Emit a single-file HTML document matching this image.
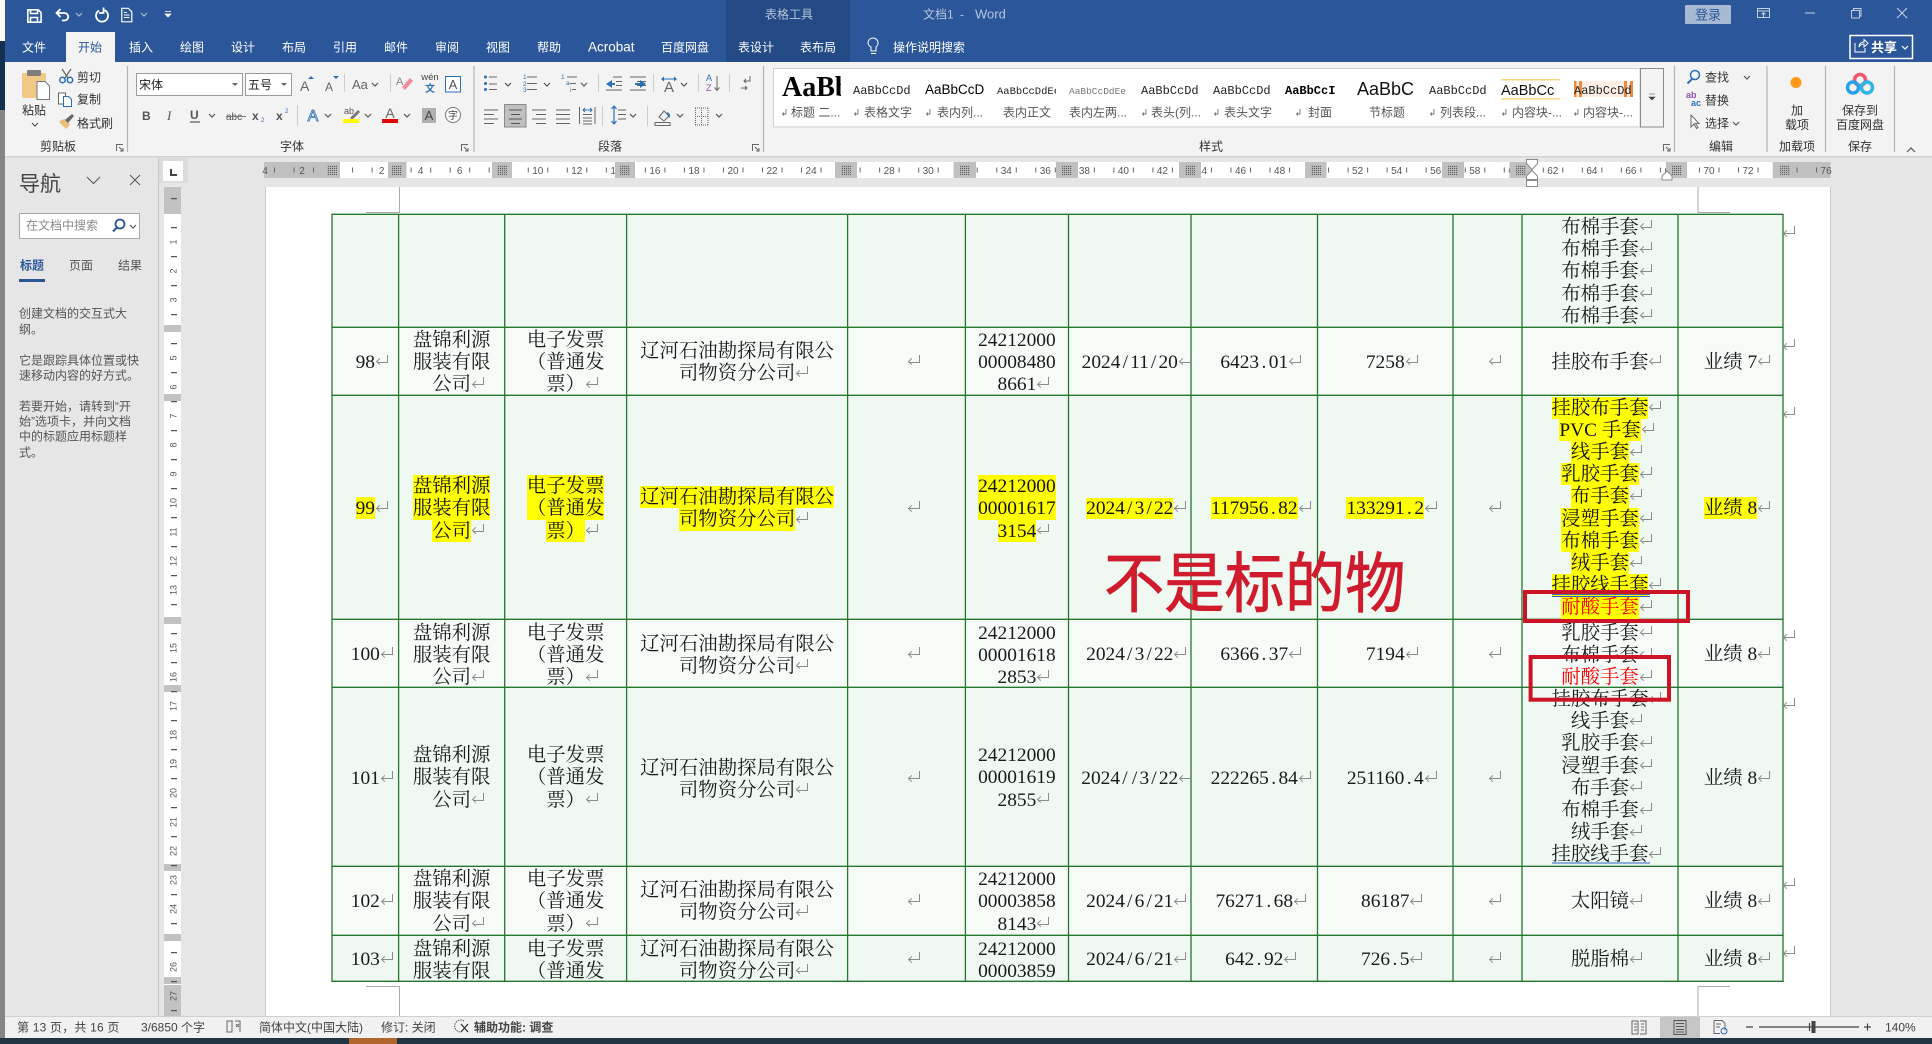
<!DOCTYPE html>
<html lang="zh-CN"><head><meta charset="utf-8"><title>文档1 - Word</title>
<style>
html,body{margin:0;padding:0;width:1932px;height:1044px;overflow:hidden;background:#e6e6e6}
svg{position:absolute;left:0;top:0;font-family:"Liberation Sans","Noto Sans CJK SC",sans-serif;font-size:12px}
.c{position:absolute;margin-top:2px;text-align:center;font:19.4px/22.2px "Liberation Serif","Noto Serif CJK SC",serif;color:#1a1a1a;white-space:nowrap}
mark{background:#ff0;color:#111;display:inline-block;height:22.2px;line-height:24.2px;vertical-align:top;position:relative;top:-1px}
i{display:inline-block;width:0;height:0;position:relative}
i::before{content:"";position:absolute;left:2px;top:-13px;width:10px;height:7px;border-right:1px solid #8c8c8c;border-bottom:1px solid #8c8c8c}
i::after{content:"";position:absolute;left:2px;top:-8.5px;width:4px;height:4px;border-left:1px solid #8c8c8c;border-bottom:1px solid #8c8c8c;transform:rotate(45deg)}
u{display:inline-block;width:9.7px;text-decoration:none;text-align:center}
.r{color:#f00}
.k1{left:332px;width:66.6px}.k2{left:398.6px;width:106px}.k3{left:504.7px;width:122px}.k4{left:626.6px;width:221px}.k5{left:847.6px;width:118px}.k6{left:965.4px;width:103px}.k7{left:1068.5px;width:122.5px;overflow:hidden;height:23px}.k8{left:1191px;width:126.5px}.k9{left:1317.5px;width:135.5px}.k10{left:1453px;width:69px}.k11{left:1522px;width:156px}.k12{left:1678px;width:105px}.e{left:1784px;width:0;text-align:left}
</style></head><body>
<svg width="1932" height="1044" viewBox="0 0 1932 1044">
<defs>
<path id="ch" d="M0 0l3 3 3-3" fill="none" stroke="#555" stroke-width="1.2"/>
<pattern id="h" width="2" height="2" patternUnits="userSpaceOnUse"><rect width="1.2" height="1.2" fill="#666"/></pattern>
</defs>
<rect width="1932" height="1044" fill="#e6e6e6"/>
<!-- left strip -->
<rect x="0" y="0" width="5" height="41" fill="#fff"/><rect x="0" y="41" width="5" height="69" fill="#14304f"/><rect x="0" y="110" width="5" height="934" fill="#858585"/>
<!-- title -->
<rect x="5" width="1927" height="62" fill="#2b579a"/>
<rect x="726" width="124" height="62" fill="#234a84"/>
<rect x="66" y="32" width="49" height="30" fill="#f3f3f3"/>
<rect x="5" y="62" width="1927" height="94" fill="#f3f3f3"/>
<rect x="5" y="156" width="1927" height="1.5" fill="#d2d2d2"/>
<!-- QAT -->
<g fill="none" stroke="#fff" stroke-width="1.6">
<path d="M27.8 9.8h10.4l2.9 2.9v9.5H27.8z"/><path d="M30.5 10v3.5h7V10" /><path d="M30.5 22v-4.5h7V22"/>
<path d="M60.5 9l-4 4 4 4M57 13h7.500a3.700 3.700 0 0 1 0 7.500H62" stroke-width="1.800"/>
<path d="M99 10.500a6 6 0 1 0 5.500-.3M103.500 7.500v5.500H99" stroke-width="1.800" />
<path d="M121.800 8.300h6.500l3.500 3.500v10h-10z" stroke-width="1.200"/><path d="M124 12.500h3M124 15h5.500M124 17.500h5.500" stroke-width="1"/>
</g>
<path d="M76 13l3 3 3-3M141 13l3 3 3-3" fill="none" stroke="#a9bad4" stroke-width="1.200"/>
<path d="M165 11.500h6M165 14h6l-3 3z" fill="#fff" stroke="#fff" stroke-width=".7"/>
<!-- tabs -->
<g fill="#fff">
<text x="22" y="51.400">文件</text><text x="78" y="51.400" fill="#2b579a">开始</text><text x="129" y="51.400">插入</text><text x="180" y="51.400">绘图</text><text x="231" y="51.400">设计</text><text x="282" y="51.400">布局</text><text x="333" y="51.400">引用</text><text x="384" y="51.400">邮件</text><text x="435" y="51.400">审阅</text><text x="486" y="51.400">视图</text><text x="537" y="51.400">帮助</text><text x="588" y="51.400" font-size="13.500">Acrobat</text><text x="661" y="51.400">百度网盘</text><text x="738" y="51.400">表设计</text><text x="800" y="51.400">表布局</text><text x="893" y="51.400">操作说明搜索</text>
</g>
<path d="M868 43a5 5 0 1 1 8 4v4h-5v-4a5 5 0 0 1-3-4zM871 53.500h5" fill="none" stroke="#fff" stroke-width="1"/>
<g fill="#b6c5dd"><text x="765" y="18.400">表格工具</text><text x="923" y="18.400">文档1</text><text x="960" y="18.400">-</text><text x="975" y="18.400" font-size="13">Word</text></g>
<rect x="1685" y="5" width="46" height="19" rx="1" fill="#a7b9d3"/><text x="1708" y="19.400" text-anchor="middle" fill="#2b579a" font-size="13">登录</text>
<g fill="none" stroke="#c3d0e3" stroke-width="1"><rect x="1757.500" y="8.500" width="12" height="9"/><path d="M1757.500 11h12M1763.500 17v-4.500M1761.500 14.500l2-2 2 2"/><path d="M1805 13h10"/><rect x="1851.500" y="10.500" width="8" height="7.500"/><path d="M1853.500 10.500v-2h7.500v7.500h-1.500"/><path d="M1897 8l10 10M1907 8l-10 10"/></g>
<rect x="1850" y="35.500" width="62.500" height="23" fill="none" stroke="#fff" stroke-width="1.500"/>
<path d="M1855 43v9h10v-4M1859 47c0-3 2-5 5-5v-2.500l4 3.800-4 3.700V44c-2 0-4 1-5 3z" fill="none" stroke="#fff" stroke-width="1"/>
<text x="1871" y="52" fill="#fff" font-size="13" font-weight="700">共享</text><path d="M1902 46l3 3 3-3" fill="none" stroke="#fff" stroke-width="1.200"/>
<!-- group separators -->
<g stroke="#b4b4b4" stroke-width="1.200"><path d="M127.500 66v86M474 66v86M763.500 66v86M1674.500 66v86M1767 66v86M1825.500 66v86M1894.500 66v86"/></g>
<g stroke="#cdcdcd" stroke-width="1"><path d="M344.500 74v18M390.500 74v18M297.500 105v21M598.500 74v18M653.500 74v18M698.500 74v18M729.500 74v18M602.500 106v20M647.500 106v20"/></g>
<!-- clipboard -->
<rect x="22" y="73" width="24" height="25" rx="1.500" fill="#f0c987"/><rect x="27" y="70" width="14" height="6" rx="1" fill="#7e7e7e"/><rect x="31" y="70" width="6" height="3" fill="#7e7e7e"/>
<path d="M37 81.500h8l4.500 4.500v13.500H37z" fill="#fff" stroke="#777"/>
<g fill="#333"><text x="22" y="114.400">粘贴</text><text x="77" y="81.400">剪切</text><text x="77" y="103.400">复制</text><text x="77" y="127.400">格式刷</text></g>
<use href="#ch" x="32" y="123"/>
<g fill="none" stroke="#666" stroke-width="1.300"><path d="M62 69l6 9M71 69l-6 9" /></g><g fill="none" stroke="#2b6fb7" stroke-width="1.500"><circle cx="62.500" cy="80" r="2.700"/><circle cx="70" cy="80" r="2.700"/></g>
<g fill="#fff" stroke="#666" stroke-width="1"><path d="M58.500 93h7l0 11h-7z"/><path d="M63.500 96.500h5l3 3v7h-8z" stroke="#2b6fb7"/></g>
<path d="M59 122l7 7 2-2 2-3-5-5-4 1z" fill="#e9bd7b"/><path d="M65 120l7-6 2 2-6 7z" fill="#666"/>
<!-- launchers -->
<g fill="none" stroke="#666" stroke-width="1"><path d="M116.500 151v-6.500H123M119 147l3.500 3.500M123 148v3h-3"/><path d="M461.500 151v-6.500H468M464 147l3.500 3.500M468 148v3h-3"/><path d="M752.500 151v-6.500H759M755 147l3.500 3.500M759 148v3h-3"/><path d="M1663.500 151v-6.500H1670M1666 147l3.500 3.500M1670 148v3h-3"/></g>
<g fill="#333"><text x="58" y="150.400" text-anchor="middle">剪贴板</text><text x="292" y="150.400" text-anchor="middle">字体</text><text x="610" y="150.400" text-anchor="middle">段落</text><text x="1211" y="150.400" text-anchor="middle">样式</text><text x="1721" y="150.400" text-anchor="middle">编辑</text><text x="1797" y="150.400" text-anchor="middle">加载项</text><text x="1860" y="150.400" text-anchor="middle">保存</text></g>
<!-- font boxes -->
<rect x="136.500" y="73.500" width="106" height="22" fill="#fff" stroke="#9c9c9c"/><rect x="245.500" y="73.500" width="46" height="22" fill="#fff" stroke="#9c9c9c"/>
<text x="139" y="89" fill="#222">宋体</text><text x="248" y="89" fill="#222">五号</text>
<path d="M232 83h6l-3 3zM281 83h6l-3 3z" fill="#666"/>
<g font-family="Liberation Sans" fill="#666">
<text x="300" y="91" font-size="14">A</text><text x="325" y="91" font-size="12">A</text><text x="352" y="89" font-size="13">Aa</text>
</g>
<path d="M308 79l3-3 3 3zM333 76h6l-3 3z" fill="#2b6fb7"/>
<use href="#ch" x="372" y="83"/>
<!-- eraser, wen, A box -->
<path d="M402 87l8-9 3 3-8 9z" fill="#ef8b9a"/><text x="396" y="85" fill="#888" font-size="11">A</text>
<text x="430" y="80" text-anchor="middle" font-size="9.500" fill="#444">wén</text><text x="430" y="92" text-anchor="middle" font-size="10" fill="#2b6fb7" font-weight="700">文</text>
<rect x="445.500" y="76.500" width="15" height="15.500" fill="#fff" stroke="#2b6fb7"/><text x="453" y="89" text-anchor="middle" font-size="13" fill="#555">A</text>
<!-- row 2 font -->
<g font-family="Liberation Sans" fill="#555">
<text x="142" y="120" font-weight="700" font-size="12">B</text><text x="167" y="120" font-style="italic" font-family="Liberation Serif" font-size="13">I</text><text x="190" y="119" font-weight="700" font-size="12">U</text><text x="226" y="120" font-size="10">abc</text><text x="252" y="120" font-weight="700" font-size="12">x</text><text x="261" y="122" font-size="6" fill="#2b6fb7">2</text><text x="276" y="120" font-weight="700" font-size="12">x</text><text x="285" y="113" font-size="6" fill="#2b6fb7">2</text>
</g>
<path d="M190 122h10" stroke="#555" stroke-width="1.200"/><path d="M226 116.500h20" stroke="#777" stroke-width="1"/>
<use href="#ch" x="209" y="114"/><use href="#ch" x="325" y="114"/><use href="#ch" x="365" y="114"/><use href="#ch" x="404" y="114"/>
<text x="313" y="121" text-anchor="middle" font-size="16" font-family="Liberation Sans" fill="#dbe8f6" stroke="#2b6fb7" stroke-width=".8">A</text>
<text x="344" y="114" font-size="9" fill="#555">ab</text><path d="M350 118l8-8 2 2-8 8z" fill="#777"/><rect x="343" y="119" width="16" height="4" fill="#ff0"/>
<text x="390" y="118" text-anchor="middle" font-size="14" font-family="Liberation Sans" fill="#666">A</text><rect x="382" y="119" width="16" height="4" fill="#e60000"/>
<rect x="422" y="108" width="14" height="15" fill="#b0b0b0"/><text x="429" y="120" text-anchor="middle" font-size="13" font-family="Liberation Sans" fill="#444">A</text>
<circle cx="453" cy="115" r="7.500" fill="#fff" stroke="#777"/><text x="453" y="119" text-anchor="middle" font-size="10" fill="#444">字</text>
<!-- para icons -->
<g fill="none" stroke="#666" stroke-width="1">
<path d="M489 77h8M489 84h8M489 89.500h8"/><path d="M527 77h10M527 83.500h10M527 89.500h10"/><path d="M567 77h10M570 83.500h6M572 89.500h4"/>
<path d="M613 77h9M616 81.500h6M616 85.500h6M606 90h16"/><path d="M630 77h16M637 81.500h9M637 85.500h9M630 90h16"/>
<path d="M484 110h14M484 114.500h10M484 119h14M484 123.500h10"/><path d="M510 110h14M512 114.500h10M510 119h14M512 123.500h10"/><path d="M532 110h14M536 114.500h10M532 119h14M536 123.500h10"/><path d="M556 110h14M556 114.500h14M556 119h14M556 123.500h14"/>
<path d="M579.500 107v17M595 107v17M583 114.500h9M583 118h9M583 121h9M583 124h9"/><path d="M618 110h8M618 114.500h8M618 119h8"/>
<path d="M655 122.500h15v3h-15z"/><path d="M659 117l5-6 5 5-5 5z"/><path d="M695 108h13M695 125h13" stroke-dasharray="1 1"/><path d="M695.500 108v17M708 108v17M701.500 108v17M695 116.500h13" stroke-dasharray="1 1"/>
</g>
<g fill="#2b6fb7"><circle cx="485.500" cy="77" r="1.500"/><circle cx="485.500" cy="83.500" r="1.500"/><circle cx="485.500" cy="89.500" r="1.500"/></g>
<g fill="#2b6fb7" font-size="6.500" font-family="Liberation Sans"><text x="523" y="79">1</text><text x="523" y="86">2</text><text x="523" y="92">3</text><text x="561" y="79">1</text><text x="566" y="85">a</text><text x="570" y="92">i</text></g>
<path d="M606 84l6-4v3h3v2h-3v3zM646 84l-6-4v3h-5v2h5v3z" fill="#2b6fb7"/>
<text x="669" y="92" text-anchor="middle" font-size="15" font-family="Liberation Sans" fill="#666">A</text><path d="M661 79l3-2.500v5zM677 79l-3-2.500v5z" fill="#2b6fb7"/><path d="M664 79h10" stroke="#2b6fb7" stroke-width="1"/>
<text x="706" y="81" font-size="9" fill="#2b6fb7" font-family="Liberation Sans">A</text><text x="706" y="91" font-size="9" fill="#8b4fb3" font-family="Liberation Sans">Z</text><path d="M717 76v14M714.500 87.500l2.500 3 2.500-3" fill="none" stroke="#666"/>
<path d="M750 76v5h-6M746 79l-2 2 2 2M741 88h6M745 86l2 2-2 2" fill="none" stroke="#666"/>
<rect x="504.500" y="104.500" width="21.500" height="22.500" fill="#c0c0c0" stroke="#8a8a8a"/><path d="M509 110h13M511 114.500h9M509 119h13M511 123.500h9" stroke="#555"/>
<path d="M614 106v18M611.500 109l2.500-3 2.500 3M611.500 121l2.500 3 2.500-3" fill="none" stroke="#2b6fb7" stroke-width="1.200"/>
<path d="M583 110h9M585 108l-2 2 2 2M590 108l2 2-2 2" fill="none" stroke="#2b6fb7"/>
<path d="M667 112c3 1 4 4 2 6-1-2-2-4-2-6z" fill="#2b6fb7"/>
<use href="#ch" x="505" y="83"/><use href="#ch" x="544" y="83"/><use href="#ch" x="581" y="83"/><use href="#ch" x="681" y="83"/><use href="#ch" x="630" y="114"/><use href="#ch" x="677" y="114"/><use href="#ch" x="716" y="114"/>
<!-- styles -->
<rect x="773.500" y="68.500" width="866.500" height="58.500" fill="#fff" stroke="#cfcfcf"/>
<rect x="1640.500" y="68.500" width="23" height="58.500" fill="#f3f3f3" stroke="#8a8a8a"/>
<path d="M1649 94h6M1649 97h6l-3 3z" fill="#444" stroke="#444" stroke-width=".6"/>
<svg x="782" y="70" width="59" height="34"><text x="0" y="26" font-family="Liberation Serif" font-weight="700" font-size="28" fill="#000">AaBbCc</text></svg>
<svg x="853" y="70" width="59" height="34"><text x="0" y="24" font-family="Liberation Mono" font-size="12" fill="#222">AaBbCcDd</text></svg>
<svg x="925" y="70" width="59" height="34"><text x="0" y="24" font-family="Liberation Sans" font-size="13.500" fill="#000">AaBbCcDd</text></svg>
<svg x="997" y="70" width="59" height="34"><text x="0" y="24" font-family="Liberation Mono" font-size="10.500" fill="#222">AaBbCcDdEe</text></svg>
<svg x="1069" y="70" width="59" height="34"><text x="0" y="24" font-family="Liberation Mono" font-size="9.500" fill="#777">AaBbCcDdEe</text></svg>
<svg x="1141" y="70" width="59" height="34"><text x="0" y="24" font-family="Liberation Mono" font-size="12" fill="#222">AaBbCcDd</text></svg>
<svg x="1213" y="70" width="59" height="34"><text x="0" y="24" font-family="Liberation Mono" font-size="12" fill="#222">AaBbCcDd</text></svg>
<svg x="1285" y="70" width="59" height="34"><text x="0" y="24" font-family="Liberation Mono" font-size="12" font-weight="700" fill="#000">AaBbCcI</text></svg>
<svg x="1357" y="70" width="59" height="34"><text x="0" y="25" font-family="Liberation Sans" font-size="18" fill="#111">AaBbC</text></svg>
<svg x="1429" y="70" width="59" height="34"><text x="0" y="24" font-family="Liberation Mono" font-size="12" fill="#222">AaBbCcDd</text></svg>
<svg x="1501" y="70" width="59" height="34"><rect y="9" width="59" height="1.500" fill="#fbd67e"/><rect y="28" width="59" height="1.500" fill="#fbd67e"/><text x="0" y="25" font-family="Liberation Sans" font-size="14.500" fill="#111">AaBbCc</text></svg>
<svg x="1574" y="70" width="59" height="34"><rect y="11" width="59" height="16" fill="#fdeee6"/><rect y="11" width="2.500" height="16" fill="#ee8a3c"/><rect x="5" y="11" width="3" height="16" fill="#ee8a3c"/><rect x="50" y="11" width="3" height="16" fill="#ee8a3c"/><rect x="56" y="11" width="3" height="16" fill="#ee8a3c"/><text x="0" y="24" font-family="Liberation Mono" font-size="12" fill="#222">AaBbCcDd</text></svg>
<g fill="#555">
<text x="791" y="116.400">标题 二...</text><text x="864" y="116.400">表格文字</text><text x="937" y="116.400">表内列...</text><text x="1003" y="116.400">表内正文</text><text x="1069" y="116.400">表内左两...</text><text x="1151" y="116.400">表头(列...</text><text x="1224" y="116.400">表头文字</text><text x="1308" y="116.400">封面</text><text x="1369" y="116.400">节标题</text><text x="1440" y="116.400">列表段...</text><text x="1512" y="116.400">内容块-...</text><text x="1583" y="116.400">内容块-...</text>
</g>
<g fill="none" stroke="#777" stroke-width=".9"><path d="M786 109v5h-3M784 112.500l-1.500 1.500 1.500 1.500M858 109v5h-3M856 112.500l-1.500 1.500 1.500 1.500M930 109v5h-3M928 112.500l-1.500 1.500 1.500 1.500M1146 109v5h-3M1144 112.500l-1.500 1.500 1.500 1.500M1218 109v5h-3M1216 112.500l-1.500 1.500 1.500 1.500M1300 109v5h-3M1298 112.500l-1.500 1.500 1.500 1.500M1434 109v5h-3M1432 112.500l-1.500 1.500 1.500 1.500M1506 109v5h-3M1504 112.500l-1.500 1.500 1.500 1.500M1578 109v5h-3M1576 112.500l-1.500 1.500 1.500 1.500"/></g>
<!-- edit -->
<circle cx="1695" cy="75" r="4.500" fill="none" stroke="#2b6fb7" stroke-width="1.500"/><path d="M1692 79l-4.500 4.500" stroke="#2b6fb7" stroke-width="2"/>
<text x="1705" y="81.400" fill="#333">查找</text><text x="1705" y="104.400" fill="#333">替换</text><text x="1705" y="127.400" fill="#333">选择</text>
<use href="#ch" x="1744" y="76"/><use href="#ch" x="1733" y="122"/>
<text x="1686" y="98" font-size="9" fill="#8b4fb3" font-family="Liberation Sans" font-weight="700">ab</text><text x="1691" y="106" font-size="9" fill="#2b6fb7" font-family="Liberation Sans" font-weight="700">ac</text>
<path d="M1691 115v12l3-3 2.500 4.500 1.500-1-2.500-4H1699z" fill="#fff" stroke="#666"/>
<circle cx="1796" cy="82.500" r="5.500" fill="#ff9a1a"/>
<g fill="#333" text-anchor="middle"><text x="1797" y="114.400">加</text><text x="1797" y="129">载项</text><text x="1860" y="114.400">保存到</text><text x="1860" y="129">百度网盘</text></g>
<g fill="none" stroke-width="3.500"><circle cx="1860" cy="80" r="5.500" stroke="#f0566e"/><circle cx="1853" cy="87.500" r="5.500" stroke="#2aa0e8"/><circle cx="1867" cy="87.500" r="5.500" stroke="#2fb5e8"/></g>
<path d="M1907 152l4-4 4 4" fill="none" stroke="#555" stroke-width="1.200"/>
<!-- nav pane -->
<rect x="158" y="157" width="1" height="859" fill="#c6c6c6"/>
<text x="19" y="191" font-size="21" fill="#444">导航</text>
<path d="M87 177l6.500 6.500L100 177M130 175l10 10M140 175l-10 10" fill="none" stroke="#555" stroke-width="1"/>
<rect x="19.500" y="213.500" width="120" height="25" fill="#fff" stroke="#a9a9a9"/>
<text x="26" y="229.400" fill="#8a8a8a">在文档中搜索</text>
<circle cx="120" cy="224" r="4.500" fill="none" stroke="#2b579a" stroke-width="1.800"/><path d="M117 227.500l-4 4" stroke="#2b579a" stroke-width="2.200"/><use href="#ch" x="130" y="225"/>
<text x="20" y="269.400" fill="#2b579a" font-weight="700">标题</text><rect x="19" y="279" width="26" height="3" fill="#2b579a"/>
<text x="69" y="269.400" fill="#555">页面</text><text x="118" y="269.400" fill="#555">结果</text>
<g fill="#555"><text x="19" y="317.400">创建文档的交互式大</text><text x="19" y="333.400">纲。</text><text x="19" y="364.400">它是跟踪具体位置或快</text><text x="19" y="379.400">速移动内容的好方式。</text><text x="19" y="410.400">若要开始，请转到“开</text><text x="19" y="425.400">始”选项卡，并向文档</text><text x="19" y="440.400">中的标题应用标题样</text><text x="19" y="456.400">式。</text></g>
<!-- corner -->
<rect x="159" y="157" width="29" height="26" fill="#dcdcdc"/><rect x="163" y="161" width="20" height="20" fill="#fff"/><path d="M171 169v6h6" fill="none" stroke="#444" stroke-width="2"/>
<!-- h ruler -->
<rect x="264" y="162" width="1566.500" height="16" fill="#c0c0c0"/>
<g fill="#fff"><rect x="340" y="162" width="48" height="16"/><rect x="406.500" y="162" width="85.500" height="16"/><rect x="512" y="162" width="103" height="16"/><rect x="635" y="162" width="200" height="16"/><rect x="857" y="162" width="96.600" height="16"/><rect x="976" y="162" width="80" height="16"/><rect x="1078" y="162" width="101" height="16"/><rect x="1201" y="162" width="104" height="16"/><rect x="1326.500" y="162" width="115.500" height="16"/><rect x="1464" y="162" width="45.600" height="16"/><rect x="1532" y="162" width="134" height="16"/><rect x="1687" y="162" width="85.700" height="16"/></g>
<line x1="274" y1="170" x2="1830" y2="170" stroke="#666" stroke-width="5" stroke-dasharray="1 18.520"/>
<g font-size="10" fill="#555" text-anchor="middle">
<text x="265" y="174">4</text><text x="302" y="174">2</text><text x="381.600" y="174">2</text><text x="420.700" y="174">4</text><text x="459.700" y="174">6</text><text x="498.800" y="174">8</text><text x="537.800" y="174">10</text><text x="576.800" y="174">12</text><text x="615.900" y="174">14</text><text x="654.900" y="174">16</text><text x="694" y="174">18</text><text x="733" y="174">20</text><text x="772" y="174">22</text><text x="811.100" y="174">24</text><text x="850.100" y="174">26</text><text x="889.200" y="174">28</text><text x="928.200" y="174">30</text><text x="967.200" y="174">32</text><text x="1006.300" y="174">34</text><text x="1045.300" y="174">36</text><text x="1084.400" y="174">38</text><text x="1123.400" y="174">40</text><text x="1162.400" y="174">42</text><text x="1201.500" y="174">44</text><text x="1240.500" y="174">46</text><text x="1279.600" y="174">48</text><text x="1318.600" y="174">50</text><text x="1357.600" y="174">52</text><text x="1396.700" y="174">54</text><text x="1435.700" y="174">56</text><text x="1474.800" y="174">58</text><text x="1513.800" y="174">60</text><text x="1552.800" y="174">62</text><text x="1591.900" y="174">64</text><text x="1630.900" y="174">66</text><text x="1670" y="174">68</text><text x="1709" y="174">70</text><text x="1748" y="174">72</text><text x="1787.100" y="174">74</text><text x="1826.100" y="174">76</text>
</g>
<g fill="#c0c0c0"><rect x="325" y="162" width="15" height="16"/><rect x="388" y="162" width="18.500" height="16"/><rect x="492" y="162" width="20" height="16"/><rect x="615" y="162" width="20" height="16"/><rect x="835" y="162" width="22" height="16"/><rect x="953.600" y="162" width="22.400" height="16"/><rect x="1056" y="162" width="22" height="16"/><rect x="1179" y="162" width="22" height="16"/><rect x="1305" y="162" width="21.500" height="16"/><rect x="1442" y="162" width="22" height="16"/><rect x="1509.600" y="162" width="22.400" height="16"/><rect x="1666" y="162" width="21" height="16"/><rect x="1777" y="162" width="15" height="16"/></g>
<g fill="url(#h)"><rect x="327" y="165" width="10" height="10"/><rect x="392" y="165" width="10" height="10"/><rect x="497" y="165" width="10" height="10"/><rect x="620" y="165" width="10" height="10"/><rect x="841" y="165" width="10" height="10"/><rect x="960" y="165" width="10" height="10"/><rect x="1062" y="165" width="10" height="10"/><rect x="1185" y="165" width="10" height="10"/><rect x="1311" y="165" width="10" height="10"/><rect x="1448" y="165" width="10" height="10"/><rect x="1516" y="165" width="10" height="10"/><rect x="1672" y="165" width="10" height="10"/><rect x="1780" y="165" width="10" height="10"/></g>
<path d="M1526.500 159.500h11v4l-5.500 6-5.500-6zM1532 170.500l5.500 5.500v3.500h-11V176zM1526.500 180.500h11v6h-11zM1667 171l5 5v4h-10v-4z" fill="#fff" stroke="#8a8a8a"/>
<!-- page -->
<rect x="266" y="187" width="1564.500" height="829" fill="#fff"/>
<path d="M265.500 187v829M1830.500 187v829" stroke="#c8c8c8"/>
<path d="M366 212.500h33.500V187M1730 212.500h-32V187M366 986.500h33.500V1016M1730 986.500h-32V1016" fill="none" stroke="#ababab"/>
<!-- v ruler -->
<rect x="164" y="187" width="17" height="829" fill="#fff"/>
<g fill="#c2c2c2"><rect x="164" y="187" width="17" height="27"/><rect x="164" y="325" width="17" height="7"/><rect x="164" y="394" width="17" height="7"/><rect x="164" y="617" width="17" height="7"/><rect x="164" y="685" width="17" height="7"/><rect x="164" y="864" width="17" height="7"/><rect x="164" y="934" width="17" height="7"/><rect x="164" y="977" width="17" height="7"/><rect x="164" y="985" width="17" height="31"/></g>
<line x1="174" y1="198" x2="174" y2="1016" stroke="#555" stroke-width="6" stroke-dasharray="1.200 27.800"/>
<g font-size="9" fill="#555" text-anchor="middle">
<text transform="translate(176.500 242) rotate(-90)">1</text><text transform="translate(176.500 271) rotate(-90)">2</text><text transform="translate(176.500 300) rotate(-90)">3</text><text transform="translate(176.500 358) rotate(-90)">5</text><text transform="translate(176.500 387) rotate(-90)">6</text><text transform="translate(176.500 416) rotate(-90)">7</text><text transform="translate(176.500 445) rotate(-90)">8</text><text transform="translate(176.500 474) rotate(-90)">9</text><text transform="translate(176.500 503) rotate(-90)">10</text><text transform="translate(176.500 532) rotate(-90)">11</text><text transform="translate(176.500 561) rotate(-90)">12</text><text transform="translate(176.500 590) rotate(-90)">13</text><text transform="translate(176.500 648) rotate(-90)">15</text><text transform="translate(176.500 677) rotate(-90)">16</text><text transform="translate(176.500 706) rotate(-90)">17</text><text transform="translate(176.500 735) rotate(-90)">18</text><text transform="translate(176.500 764) rotate(-90)">19</text><text transform="translate(176.500 793) rotate(-90)">20</text><text transform="translate(176.500 822) rotate(-90)">21</text><text transform="translate(176.500 851) rotate(-90)">22</text><text transform="translate(176.500 880) rotate(-90)">23</text><text transform="translate(176.500 909) rotate(-90)">24</text><text transform="translate(176.500 967) rotate(-90)">26</text><text transform="translate(176.500 996) rotate(-90)">27</text>
</g>
<!-- table bg -->
<rect x="332" y="214.300" width="1451" height="113" fill="#eff8f1"/><rect x="332" y="327.300" width="1451" height="68" fill="#f7fbf8"/><rect x="332" y="395.300" width="1451" height="224" fill="#eff8f1"/><rect x="332" y="619.300" width="1451" height="68" fill="#f7fbf8"/><rect x="332" y="687.300" width="1451" height="179" fill="#eff8f1"/><rect x="332" y="866.300" width="1451" height="69" fill="#f7fbf8"/><rect x="332" y="935.300" width="1451" height="46" fill="#eff8f1"/>
<g stroke="#24772d" stroke-width="1.300"><path d="M331.400 214.300H1783.600M331.400 327.300H1783.600M331.400 395.300H1783.600M331.400 619.300H1783.600M331.400 687.300H1783.600M331.400 866.300H1783.600M331.400 935.300H1783.600M331.400 981.300H1783.600"/><path d="M332 214v768M398.600 214v768M504.700 214v768M626.600 214v768M847.600 214v768M965.400 214v768M1068.500 214v768M1191 214v768M1317.500 214v768M1453 214v768M1522 214v768M1678 214v768M1783 214v768"/></g>
<!-- status -->
<rect x="5" y="1016" width="1927" height="22" fill="#f1f1f1"/><rect x="5" y="1016" width="1927" height="1" fill="#cfcfcf"/>
<rect x="0" y="1038" width="1932" height="6" fill="#1f3444"/><rect x="349" y="1038" width="48" height="6" fill="#b0652c"/>
<g fill="#444"><text x="17" y="1031.400" letter-spacing=".2">第 13 页，共 16 页</text><text x="141" y="1031.400">3/6850 个字</text><text x="259" y="1031.400">简体中文(中国大陆)</text><text x="381" y="1031.400">修订: 关闭</text><text x="474" y="1031.400" font-weight="700">辅助功能: 调查</text><text x="1885" y="1031.400">140%</text></g>
<path d="M227 1021h5v11h-5zM232 1021h1M235 1021h5v11" fill="none" stroke="#666"/><path d="M236 1024l3 3M239 1024l-3 3" stroke="#666"/>
<path d="M464 1021a6 6 0 1 0-3 11" fill="none" stroke="#555" stroke-dasharray="1.500 1"/><path d="M461 1024l7 8M468 1024l-7 8" stroke="#333" stroke-width="1.300"/>
<rect x="1660" y="1017" width="40" height="21" fill="#c6c6c6"/>
<path d="M1632 1021h6v13h-6zM1640 1021h6v13h-6M1634 1024h3M1634 1027h3M1634 1030h3M1641 1024h3M1641 1027h3M1641 1030h3" fill="none" stroke="#666"/>
<path d="M1674 1020.500h12v14h-12zM1676 1023.500h8M1676 1026.500h8M1676 1029.500h8M1676 1032h8" fill="none" stroke="#555"/>
<path d="M1714 1020.500h8l3 3v7M1714 1020.500v13h6M1716 1024h5M1716 1027h4" fill="none" stroke="#666"/><circle cx="1724" cy="1031" r="3" fill="none" stroke="#2b6fb7"/>
<path d="M1746 1027h7M1759 1027h100M1864 1027h7M1867.500 1023.500v7M1809.500 1023v8" stroke="#444" stroke-width="1.200"/><rect x="1811.500" y="1021" width="4" height="12" fill="#444"/>
</svg>

<div class="c k1" style="top:349.900px">98<i></i></div>
<div class="c k2" style="top:327.900px">盘锦利源<br>服装有限<br>公司<i></i></div>
<div class="c k3" style="top:327.900px">电子发票<br>（普通发<br>票）<i></i></div>
<div class="c k4" style="top:338.900px">辽河石油勘探局有限公<br>司物资分公司<i></i></div>
<div class="c k5" style="top:349.900px"><i></i></div>
<div class="c k6" style="top:327.900px">24212000<br>00008480<br>8661<i></i></div>
<div class="c k7" style="top:349.900px">2024<u>/</u>11<u>/</u>20<i></i></div>
<div class="c k8" style="top:349.900px">6423<u>.</u>01<i></i></div>
<div class="c k9" style="top:349.900px">7258<i></i></div>
<div class="c k10" style="top:349.900px"><i></i></div>
<div class="c k11" style="top:349.900px">挂胶布手套<i></i></div>
<div class="c k12" style="top:349.900px">业绩 7<i></i></div>

<div class="c k1" style="top:496.200px"><mark>99</mark><i></i></div>
<div class="c k2" style="top:474.200px"><mark>盘锦利源</mark><br><mark>服装有限</mark><br><mark>公司</mark><i></i></div>
<div class="c k3" style="top:474.200px"><mark>电子发票</mark><br><mark>（普通发</mark><br><mark>票）</mark><i></i></div>
<div class="c k4" style="top:485.200px"><mark>辽河石油勘探局有限公</mark><br><mark>司物资分公司</mark><i></i></div>
<div class="c k5" style="top:496.200px"><i></i></div>
<div class="c k6" style="top:474.200px"><mark>24212000</mark><br><mark>00001617</mark><br><mark>3154</mark><i></i></div>
<div class="c k7" style="top:496.200px"><mark>2024<u>/</u>3<u>/</u>22</mark><i></i></div>
<div class="c k8" style="top:496.200px"><mark>117956<u>.</u>82</mark><i></i></div>
<div class="c k9" style="top:496.200px"><mark>133291<u>.</u>2</mark><i></i></div>
<div class="c k10" style="top:496.200px"><i></i></div>
<div class="c k11" style="top:395.600px"><mark>挂胶布手套</mark><i></i><br><mark>PVC 手套</mark><i></i><br><mark>线手套</mark><i></i><br><mark>乳胶手套</mark><i></i><br><mark>布手套</mark><i></i><br><mark>浸塑手套</mark><i></i><br><mark>布棉手套</mark><i></i><br><mark>绒手套</mark><i></i><br><mark>挂胶线手套</mark><i></i><br><mark class="r" style="color:#f00">耐酸手套</mark><i></i></div>
<div class="c k12" style="top:496.200px"><mark>业绩 8</mark><i></i></div>

<div class="c k1" style="top:642px">100<i></i></div>
<div class="c k2" style="top:620.600px">盘锦利源<br>服装有限<br>公司<i></i></div>
<div class="c k3" style="top:620.600px">电子发票<br>（普通发<br>票）<i></i></div>
<div class="c k4" style="top:631.600px">辽河石油勘探局有限公<br>司物资分公司<i></i></div>
<div class="c k5" style="top:642px"><i></i></div>
<div class="c k6" style="top:620.600px">24212000<br>00001618<br>2853<i></i></div>
<div class="c k7" style="top:642px">2024<u>/</u>3<u>/</u>22<i></i></div>
<div class="c k8" style="top:642px">6366<u>.</u>37<i></i></div>
<div class="c k9" style="top:642px">7194<i></i></div>
<div class="c k10" style="top:642px"><i></i></div>
<div class="c k11" style="top:620.600px">乳胶手套<i></i><br>布棉手套<i></i><br><span class="r">耐酸手套</span><i></i></div>
<div class="c k12" style="top:642px">业绩 8<i></i></div>

<div class="c k1" style="top:766px">101<i></i></div>
<div class="c k2" style="top:743.200px">盘锦利源<br>服装有限<br>公司<i></i></div>
<div class="c k3" style="top:743.200px">电子发票<br>（普通发<br>票）<i></i></div>
<div class="c k4" style="top:755.600px">辽河石油勘探局有限公<br>司物资分公司<i></i></div>
<div class="c k5" style="top:766px"><i></i></div>
<div class="c k6" style="top:743.200px">24212000<br>00001619<br>2855<i></i></div>
<div class="c k7" style="top:766px">2024<u>/</u><u>/</u>3<u>/</u>22<i></i></div>
<div class="c k8" style="top:766px">222265<u>.</u>84<i></i></div>
<div class="c k9" style="top:766px">251160<u>.</u>4<i></i></div>
<div class="c k10" style="top:766px"><i></i></div>
<div class="c k11" style="top:687px">挂胶布手套<i></i><br>线手套<i></i><br>乳胶手套<i></i><br>浸塑手套<i></i><br>布手套<i></i><br>布棉手套<i></i><br>绒手套<i></i><br>挂胶线手套<i></i></div>
<div class="c k12" style="top:766px">业绩 8<i></i></div>

<div class="c k1" style="top:889.200px">102<i></i></div>
<div class="c k2" style="top:867.200px">盘锦利源<br>服装有限<br>公司<i></i></div>
<div class="c k3" style="top:867.200px">电子发票<br>（普通发<br>票）<i></i></div>
<div class="c k4" style="top:878.200px">辽河石油勘探局有限公<br>司物资分公司<i></i></div>
<div class="c k5" style="top:889.200px"><i></i></div>
<div class="c k6" style="top:867.200px">24212000<br>00003858<br>8143<i></i></div>
<div class="c k7" style="top:889.200px">2024<u>/</u>6<u>/</u>21<i></i></div>
<div class="c k8" style="top:889.200px">76271<u>.</u>68<i></i></div>
<div class="c k9" style="top:889.200px">86187<i></i></div>
<div class="c k10" style="top:889.200px"><i></i></div>
<div class="c k11" style="top:889.200px">太阳镜<i></i></div>
<div class="c k12" style="top:889.200px">业绩 8<i></i></div>

<div class="c k1" style="top:947.200px">103<i></i></div>
<div class="c k2" style="top:936.600px">盘锦利源<br>服装有限</div>
<div class="c k3" style="top:936.600px">电子发票<br>（普通发</div>
<div class="c k4" style="top:936.600px">辽河石油勘探局有限公<br>司物资分公司<i></i></div>
<div class="c k5" style="top:947.200px"><i></i></div>
<div class="c k6" style="top:936.600px">24212000<br>00003859</div>
<div class="c k7" style="top:947.200px">2024<u>/</u>6<u>/</u>21<i></i></div>
<div class="c k8" style="top:947.200px">642<u>.</u>92<i></i></div>
<div class="c k9" style="top:947.200px">726<u>.</u>5<i></i></div>
<div class="c k10" style="top:947.200px"><i></i></div>
<div class="c k11" style="top:947.200px">脱脂棉<i></i></div>
<div class="c k12" style="top:947.200px">业绩 8<i></i></div>

<div class="c" style="top:221px;left:1782px;width:0"><i></i></div>
<div class="c" style="top:334px;left:1782px;width:0"><i></i></div>
<div class="c" style="top:402px;left:1782px;width:0"><i></i></div>
<div class="c" style="top:625px;left:1782px;width:0"><i></i></div>
<div class="c" style="top:693px;left:1782px;width:0"><i></i></div>
<div class="c" style="top:873px;left:1782px;width:0"><i></i></div>
<div class="c" style="top:941px;left:1782px;width:0"><i></i></div>
<div class="c k11" style="top:214.900px">布棉手套<i></i><br>布棉手套<i></i><br>布棉手套<i></i><br>布棉手套<i></i><br>布棉手套<i></i></div>

<svg width="1932" height="1044" viewBox="0 0 1932 1044" style="pointer-events:none">
<path d="M1552 594.300h98M1552 596.500h98M1552 863h98" stroke="#2a62c4" stroke-width="1.100"/>
<text transform="translate(1104 606.500) scale(1.015 1.1)" font-size="59.400" fill="#cf1b2d" stroke="#cf1b2d" stroke-width=".7" font-family="Noto Sans CJK SC">不是标的物</text>
<rect x="1525" y="592" width="163" height="29" fill="none" stroke="#cc1427" stroke-width="4"/>
<rect x="1530.600" y="657" width="138.400" height="42.700" fill="none" stroke="#cc1427" stroke-width="4"/>
</svg>
</body></html>
